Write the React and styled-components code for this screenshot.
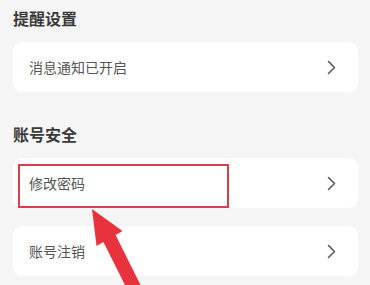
import React from 'react'
import styled, { createGlobalStyle } from 'styled-components'

const GlobalStyle = createGlobalStyle`
  html, body {
    margin: 0;
    padding: 0;
    background: #f5f5f5;
    overflow: hidden;
  }
  body {
    font-family: "Noto Sans CJK SC", "Noto Sans", sans-serif;
  }
`

const Page = styled.div`
  position: relative;
  width: 370px;
  height: 285px;
  box-sizing: border-box;
  padding: 9px 12px 0 13px;
  background: #f5f5f5;
  overflow: hidden;
`

const Section = styled.section`
  margin-top: ${p => p.$top || 0}px;
`

const Title = styled.div`
  height: 18px;
  line-height: 18px;
  font-size: 16px;
  font-weight: 700;
  color: #3a3a3a;
  margin-bottom: 15px;
`

const List = styled.div`
  display: flex;
  flex-direction: column;
  gap: 18px;
`

const Row = styled.div`
  position: relative;
  height: 50px;
  background: #fff;
  border-radius: 9px;
  display: flex;
  align-items: center;
  justify-content: space-between;
  padding: 0 22px 0 16px;
`

const Label = styled.span`
  font-size: 14px;
  color: #555;
`

const Highlight = styled.div`
  position: absolute;
  left: 5px;
  top: 6px;
  width: 211px;
  height: 44px;
  box-sizing: border-box;
  border: 2px solid #dc3f4a;
`

const Arrow = styled.svg`
  position: absolute;
  left: 0;
  top: 0;
  pointer-events: none;
`

const Chevron = () => (
  <svg width="9" height="15" viewBox="0 0 9 15">
    <path d="M1.5 1.5 L7.5 7.5 L1.5 13.5" fill="none" stroke="#555" strokeWidth="1.5" strokeLinecap="round" strokeLinejoin="round" />
  </svg>
)

const Item = ({ label, children }) => (
  <Row>
    <Label>{label}</Label>
    <Chevron />
    {children}
  </Row>
)

export default function App() {
  return (
    <>
      <GlobalStyle />
      <Page>
        <Section>
          <Title>提醒设置</Title>
          <List>
            <Item label="消息通知已开启" />
          </List>
        </Section>
        <Section $top={33}>
          <Title>账号安全</Title>
          <List>
            <Item label="修改密码">
              <Highlight />
            </Item>
            <Item label="账号注销" />
          </List>
        </Section>
        <Arrow width="370" height="285" viewBox="0 0 370 285">
          <polygon
            points="92,209 122.5,231 115.6,235 148,300 136,307 103.4,242 96.5,246"
            fill="#e8333f"
          />
        </Arrow>
      </Page>
    </>
  )
}
